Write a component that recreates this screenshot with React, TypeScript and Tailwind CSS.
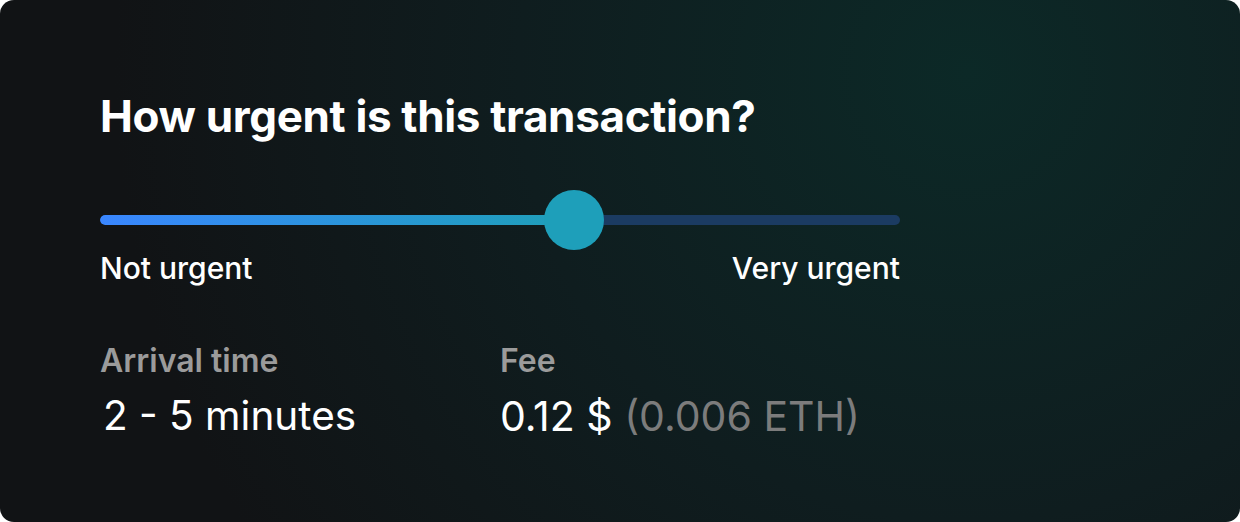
export default function App() {
  return (
    <div className="w-[1240px] h-[522px] bg-white" style={{ fontFamily: "Inter, 'Noto Sans', sans-serif" }}>
      <div className="w-full h-full rounded-[14px] overflow-hidden bg-[#111214] bg-[radial-gradient(circle_at_78%_14%,#0c2927_0%,#0f1d1f_42%,#111315_80%)] px-[100px] pt-[94px]">
        <div className="w-[800px]">
          <h1 className="text-[44px] leading-none font-bold text-white tracking-[-0.35px]">How urgent is this transaction?</h1>

          <div className="relative h-[60px] mt-[52px] flex items-center">
            <div className="w-full h-[10px] rounded-full bg-[#1b3b62] overflow-hidden">
              <div className="h-full w-[474px] rounded-full bg-gradient-to-r from-[#3a86ff] to-[#1f9fb8]" />
            </div>
            <div className="absolute left-[444px] top-0 w-[60px] h-[60px] rounded-full bg-[#1e9fba]" />
          </div>

          <div className="flex justify-between mt-[3px] text-[30px] leading-none font-medium text-white">
            <span>Not urgent</span>
            <span>Very urgent</span>
          </div>

          <div className="grid grid-cols-2 mt-[62px]">
            <div>
              <div className="text-[32px] leading-none font-semibold text-[#9b9b9b]">Arrival time</div>
              <div className="mt-[19px] pl-[3px] text-[40.5px] leading-none text-white">2 - 5 minutes</div>
            </div>
            <div>
              <div className="text-[32px] leading-none font-semibold text-[#9b9b9b]">Fee</div>
              <div className="mt-[19px] text-[41px] leading-none text-white">
                0.12 $ <span className="text-[#7c7c7c]">(0.006 ETH)</span>
              </div>
            </div>
          </div>
        </div>
      </div>
    </div>
  );
}
